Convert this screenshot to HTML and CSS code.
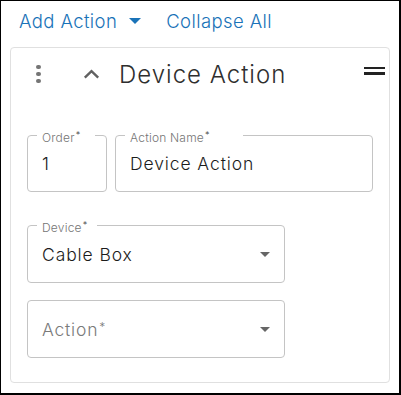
FILE: index.html
```html
<!DOCTYPE html>
<html lang="en">
  <head>
    <meta charset="UTF-8" />
    <title>Device Action</title>
    <link rel="stylesheet" href="styles.css">
  </head>
  <body>
    <div class="frame">
      <div class="toolbar">
        <button class="link-btn">
          Add Action
          <svg class="caret" width="12" height="6" viewBox="0 0 12 6"><path d="M0 0h12L6 6z" fill="#1a73b8"/></svg>
        </button>
        <button class="link-btn">Collapse All</button>
      </div>

      <div class="card">
        <div class="card__header">
          <div class="kebab">
            <span></span><span></span><span></span>
          </div>
          <svg class="chevron" width="17" height="10" viewBox="0 0 17 10">
            <path d="M1.8 8.6L8.5 2.2l6.7 6.4" fill="none" stroke="#616161" stroke-width="2.4"/>
          </svg>
          <h2 class="card__title">Device Action</h2>
          <div class="handle"><span></span><span></span></div>
        </div>

        <div class="row">
          <div class="field field--order">
            <label class="field__label label--order">Order<sup>*</sup></label>
            <span class="field__value">1</span>
          </div>
          <div class="field field--grow">
            <label class="field__label label--name">Action Name<sup>*</sup></label>
            <span class="field__value">Device Action</span>
          </div>
        </div>

        <div class="row row--device">
          <div class="field field--select">
            <label class="field__label label--device">Device<sup>*</sup></label>
            <span class="field__value">Cable Box</span>
            <svg class="arrow" width="10" height="5" viewBox="0 0 10 5"><path d="M0 0h10L5 5z" fill="#666"/></svg>
          </div>
        </div>

        <div class="row row--action">
          <div class="field field--select">
            <span class="field__placeholder">Action<sup>*</sup></span>
            <svg class="arrow" width="10" height="5" viewBox="0 0 10 5"><path d="M0 0h10L5 5z" fill="#666"/></svg>
          </div>
        </div>
      </div>
    </div>
  </body>
</html>
```

FILE: styles.css
```css
* {
  margin: 0;
  padding: 0;
  box-sizing: border-box;
}

body {
  font-family: "Inter", "Noto Sans", sans-serif;
  background: #ffffff;
}

.frame {
  width: 401px;
  height: 395px;
  border-style: solid;
  border-color: #000000;
  border-width: 1px 2px 2px 1px;
  background: #ffffff;
}

.toolbar {
  height: 40px;
  display: flex;
  align-items: center;
  padding-left: 18px;
  gap: 25px;
}

.link-btn {
  font-family: inherit;
  font-size: 18.5px;
  font-weight: 300;
  letter-spacing: 0.4px;
  color: #1a73b8;
  background: none;
  border: none;
  cursor: pointer;
  display: flex;
  align-items: center;
  gap: 12px;
}

.card {
  margin: 6px 9px 0;
  height: 336px;
  border: 1px solid #e0e0e0;
  border-radius: 4px;
  padding: 0 16px;
}

.card__header {
  height: 52px;
  display: flex;
  align-items: center;
}

.kebab {
  width: 5px;
  margin-left: 9px;
  display: flex;
  flex-direction: column;
  gap: 2.5px;
}
.kebab span {
  width: 4.5px;
  height: 4.5px;
  border-radius: 50%;
  background: #757575;
}

.chevron {
  margin-left: 42px;
}

.card__title {
  margin-left: 19px;
  font-size: 24px;
  font-weight: 300;
  letter-spacing: 1px;
  color: #2e2e2e;
  flex: 1;
}

.handle {
  width: 21px;
  margin-right: -12px;
  margin-top: -7px;
  display: flex;
  flex-direction: column;
  gap: 3px;
}
.handle span {
  height: 2.5px;
  background: #222222;
}

.row {
  display: flex;
  gap: 8px;
  margin-top: 35px;
}
.row--device {
  margin-top: 33px;
  width: 258px;
}
.row--action {
  margin-top: 17px;
  width: 258px;
}

.field {
  position: relative;
  height: 57px;
  border: 1px solid #c4c4c4;
  border-radius: 4px;
  display: flex;
  align-items: center;
  padding-left: 14px;
}
.field--order {
  width: 80px;
}
.field--grow {
  flex: 1;
}
.field--select {
  flex: 1;
  height: 58px;
  padding-right: 14px;
}

.field__label {
  position: absolute;
  top: -8px;
  left: 9px;
  padding: 0 5px;
  background: #ffffff;
  font-size: 12px;
  font-weight: 300;
  letter-spacing: 0.2px;
  line-height: 14px;
  color: #757575;
}
.label--order {
  padding-right: 15px;
}
.label--name {
  padding-right: 33px;
}
.label--device {
  padding-right: 10px;
}

sup {
  font-size: 9px;
  vertical-align: 4px;
  margin-left: 1px;
  color: #444444;
}

.field__value {
  font-size: 17.5px;
  font-weight: 300;
  letter-spacing: 0.9px;
  color: #1c1c1c;
  flex: 1;
}

.field__placeholder {
  font-size: 17.5px;
  font-weight: 300;
  letter-spacing: 0.8px;
  color: #7a7a7a;
  flex: 1;
}
.field__placeholder sup {
  font-size: 12px;
  vertical-align: 5px;
  color: #7a7a7a;
}
```
